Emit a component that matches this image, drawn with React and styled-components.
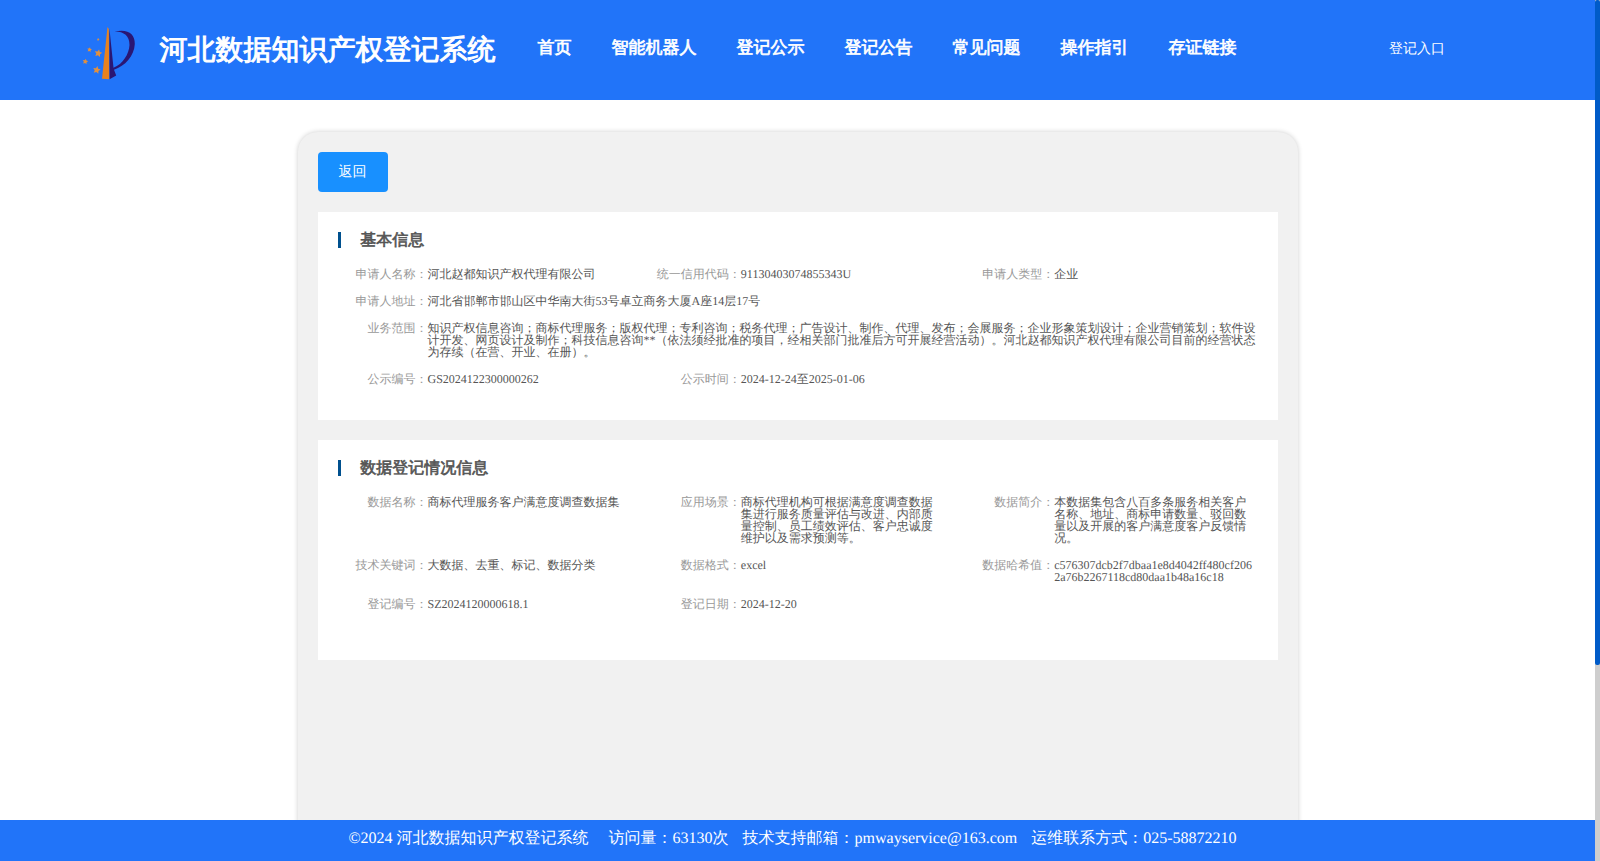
import React from "react";
import styled, { createGlobalStyle } from "styled-components";

const GlobalStyle = createGlobalStyle`
  * { box-sizing: border-box; }
  html, body { margin: 0; padding: 0; }
  body {
    height: 861px;
    overflow: hidden;
    background: #fff;
    font-family: "Liberation Serif", serif;
    text-rendering: geometricPrecision;
  }
`;

const Window = styled.div`
  display: flex;
  width: 1600px;
  height: 861px;
`;

const Page = styled.div`
  flex: 1;
  display: flex;
  flex-direction: column;
  min-width: 0;
`;

const ScrollTrack = styled.div`
  width: 5px;
  background: #cecece;
`;

const ScrollThumb = styled.div`
  height: 665px;
  border-radius: 2px;
  background: #005bc8;
`;

const Header = styled.header`
  flex: none;
  display: flex;
  align-items: flex-start;
  height: 100px;
  background: #2174f9;
  color: #fff;
`;

const Logo = styled.svg`
  flex: none;
  width: 70px;
  height: 70px;
  margin: 20px 14.6px 0 75px;
`;

const SiteTitle = styled.h1`
  width: 377.8px;
  margin: 31px 0 0;
  font-size: 28px;
  font-weight: 400;
  -webkit-text-stroke: 1px currentColor;
  line-height: 40px;
  white-space: nowrap;
`;

const Nav = styled.nav`
  display: flex;
  gap: 40px;
  width: 851.6px;
  margin-top: 33px;
`;

const NavItem = styled.a`
  font-size: 17px;
  -webkit-text-stroke: 0.7px currentColor;
  line-height: 30px;
  white-space: nowrap;
`;

const Entry = styled.a`
  margin-top: 35px;
  font-size: 14px;
  line-height: 30px;
  white-space: nowrap;
`;

const Main = styled.main`
  flex: 1;
  min-height: 0;
  padding-top: 32px;
  overflow: hidden;
`;

const Card = styled.section`
  display: flex;
  flex-direction: column;
  gap: 20px;
  width: 1000px;
  height: 900px;
  margin: 0 auto;
  padding: 20px;
  border-radius: 20px;
  background: #f1f1f1;
  box-shadow: 0 0 5px rgba(0, 0, 0, 0.2);
`;

const BackButton = styled.button`
  flex: none;
  width: 70px;
  height: 40px;
  padding: 2px 0 0;
  border: 0;
  border-radius: 4px;
  background: #1890ff;
  color: #fff;
  font: 14px/38px "Liberation Serif", serif;
  text-rendering: geometricPrecision;
`;

const Panel = styled.section`
  flex: none;
  height: ${(p) => p.$height}px;
  padding: 20px 10px;
  background: #fff;
`;

const PanelTitle = styled.h2`
  height: 16px;
  margin: 0 0 20px 10px;
  padding-left: 19.8px;
  border-left: 3px solid #00508e;
  color: #555;
  font-size: 16px;
  font-weight: 400;
  -webkit-text-stroke: 0.65px currentColor;
  line-height: 18px;
`;

const Fields = styled.dl`
  display: grid;
  grid-template-columns: repeat(3, 1fr);
  row-gap: 15px;
  margin: 0;
  font-size: 12px;
  line-height: 12px;
`;

const Field = styled.div`
  display: flex;
  grid-column: ${(p) => (p.$wide ? "1 / -1" : "auto")};
  min-width: 0;
`;

const Label = styled.dt`
  flex: none;
  width: 100px;
  color: #999;
  text-align: right;
`;

const Value = styled.dd`
  flex: 1;
  min-width: 0;
  margin: 0;
  padding-right: 11px;
  color: #555;
  word-break: break-all;
`;

const Footer = styled.footer`
  flex: none;
  display: flex;
  height: 41px;
  padding-left: 348.4px;
  background: #2174f9;
  color: #fff;
  font-size: 16px;
  line-height: 38px;
  white-space: nowrap;
`;

const FooterItem = styled.span`
  margin-right: ${(p) => p.$gap || 0}px;
`;

const NAV = ["首页", "智能机器人", "登记公示", "登记公告", "常见问题", "操作指引", "存证链接"];

const BASIC = [
  ["申请人名称", "河北赵都知识产权代理有限公司"],
  ["统一信用代码", "91130403074855343U"],
  ["申请人类型", "企业"],
  ["申请人地址", "河北省邯郸市邯山区中华南大街53号卓立商务大厦A座14层17号", true],
  [
    "业务范围",
    "知识产权信息咨询；商标代理服务；版权代理；专利咨询；税务代理；广告设计、制作、代理、发布；会展服务；企业形象策划设计；企业营销策划；软件设计开发、网页设计及制作；科技信息咨询**（依法须经批准的项目，经相关部门批准后方可开展经营活动）。河北赵都知识产权代理有限公司目前的经营状态为存续（在营、开业、在册）。",
    true,
  ],
  ["公示编号", "GS2024122300000262"],
  ["公示时间", "2024-12-24至2025-01-06"],
];

const DATA = [
  ["数据名称", "商标代理服务客户满意度调查数据集"],
  ["应用场景", "商标代理机构可根据满意度调查数据集进行服务质量评估与改进、内部质量控制、员工绩效评估、客户忠诚度维护以及需求预测等。"],
  ["数据简介", "本数据集包含八百多条服务相关客户名称、地址、商标申请数量、驳回数量以及开展的客户满意度客户反馈情况。"],
  ["技术关键词", "大数据、去重、标记、数据分类"],
  ["数据格式", "excel"],
  ["数据哈希值", "c576307dcb2f7dbaa1e8d4042ff480cf2062a76b2267118cd80daa1b48a16c18"],
  ["登记编号", "SZ2024120000618.1"],
  ["登记日期", "2024-12-20"],
];

const STARS = [
  [23.3, 33.3, 4],
  [21.7, 50, 4],
  [14.5, 29.7, 2.5],
  [10.3, 41.5, 2.9],
  [23.2, 19.5, 1.5],
];

function starPoints(cx, cy, r) {
  return Array.from({ length: 10 }, (_, i) => {
    const radius = i % 2 ? r * 0.5 : r;
    const angle = -Math.PI / 2 + 0.2 + (i * Math.PI) / 5;
    return `${cx + radius * Math.cos(angle)},${cy + radius * Math.sin(angle)}`;
  }).join(" ");
}

function InfoPanel({ title, fields, height }) {
  return (
    <Panel $height={height}>
      <PanelTitle>{title}</PanelTitle>
      <Fields>
        {fields.map(([label, value, wide]) => (
          <Field key={label} $wide={wide}>
            <Label>{label}：</Label>
            <Value>{value}</Value>
          </Field>
        ))}
      </Fields>
    </Panel>
  );
}

export default function App() {
  return (
    <Window>
      <GlobalStyle />
      <Page>
        <Header>
          <Logo viewBox="0 0 70 70">
            <path d="M32.5 7 L27 58.7 L34.3 59.3 L33.8 9 Z" fill="#e8821e" />
            <path d="M34.4 8.3 L38.5 47.8 C48 44 54 34 54.5 25 C54.6 16 49 11.5 39.5 11.6 C53 8.5 60 14 59.8 24 C59.2 36 50 46 39 49.8 L41.2 55.5 L34.6 59.2 Z" fill="#2a1673" />
            {STARS.map(([x, y, r]) => (
              <polygon key={x} points={starPoints(x, y, r)} fill="#e1903f" />
            ))}
          </Logo>
          <SiteTitle>河北数据知识产权登记系统</SiteTitle>
          <Nav>
            {NAV.map((item) => (
              <NavItem key={item}>{item}</NavItem>
            ))}
          </Nav>
          <Entry>登记入口</Entry>
        </Header>
        <Main>
          <Card>
            <BackButton>返回</BackButton>
            <InfoPanel title="基本信息" fields={BASIC} height={208} />
            <InfoPanel title="数据登记情况信息" fields={DATA} height={220} />
          </Card>
        </Main>
        <Footer>
          <FooterItem $gap={20}>©2024 河北数据知识产权登记系统</FooterItem>
          <FooterItem $gap={14}>访问量：63130次</FooterItem>
          <FooterItem $gap={14}>技术支持邮箱：pmwayservice@163.com</FooterItem>
          <FooterItem>运维联系方式：025-58872210</FooterItem>
        </Footer>
      </Page>
      <ScrollTrack>
        <ScrollThumb />
      </ScrollTrack>
    </Window>
  );
}
